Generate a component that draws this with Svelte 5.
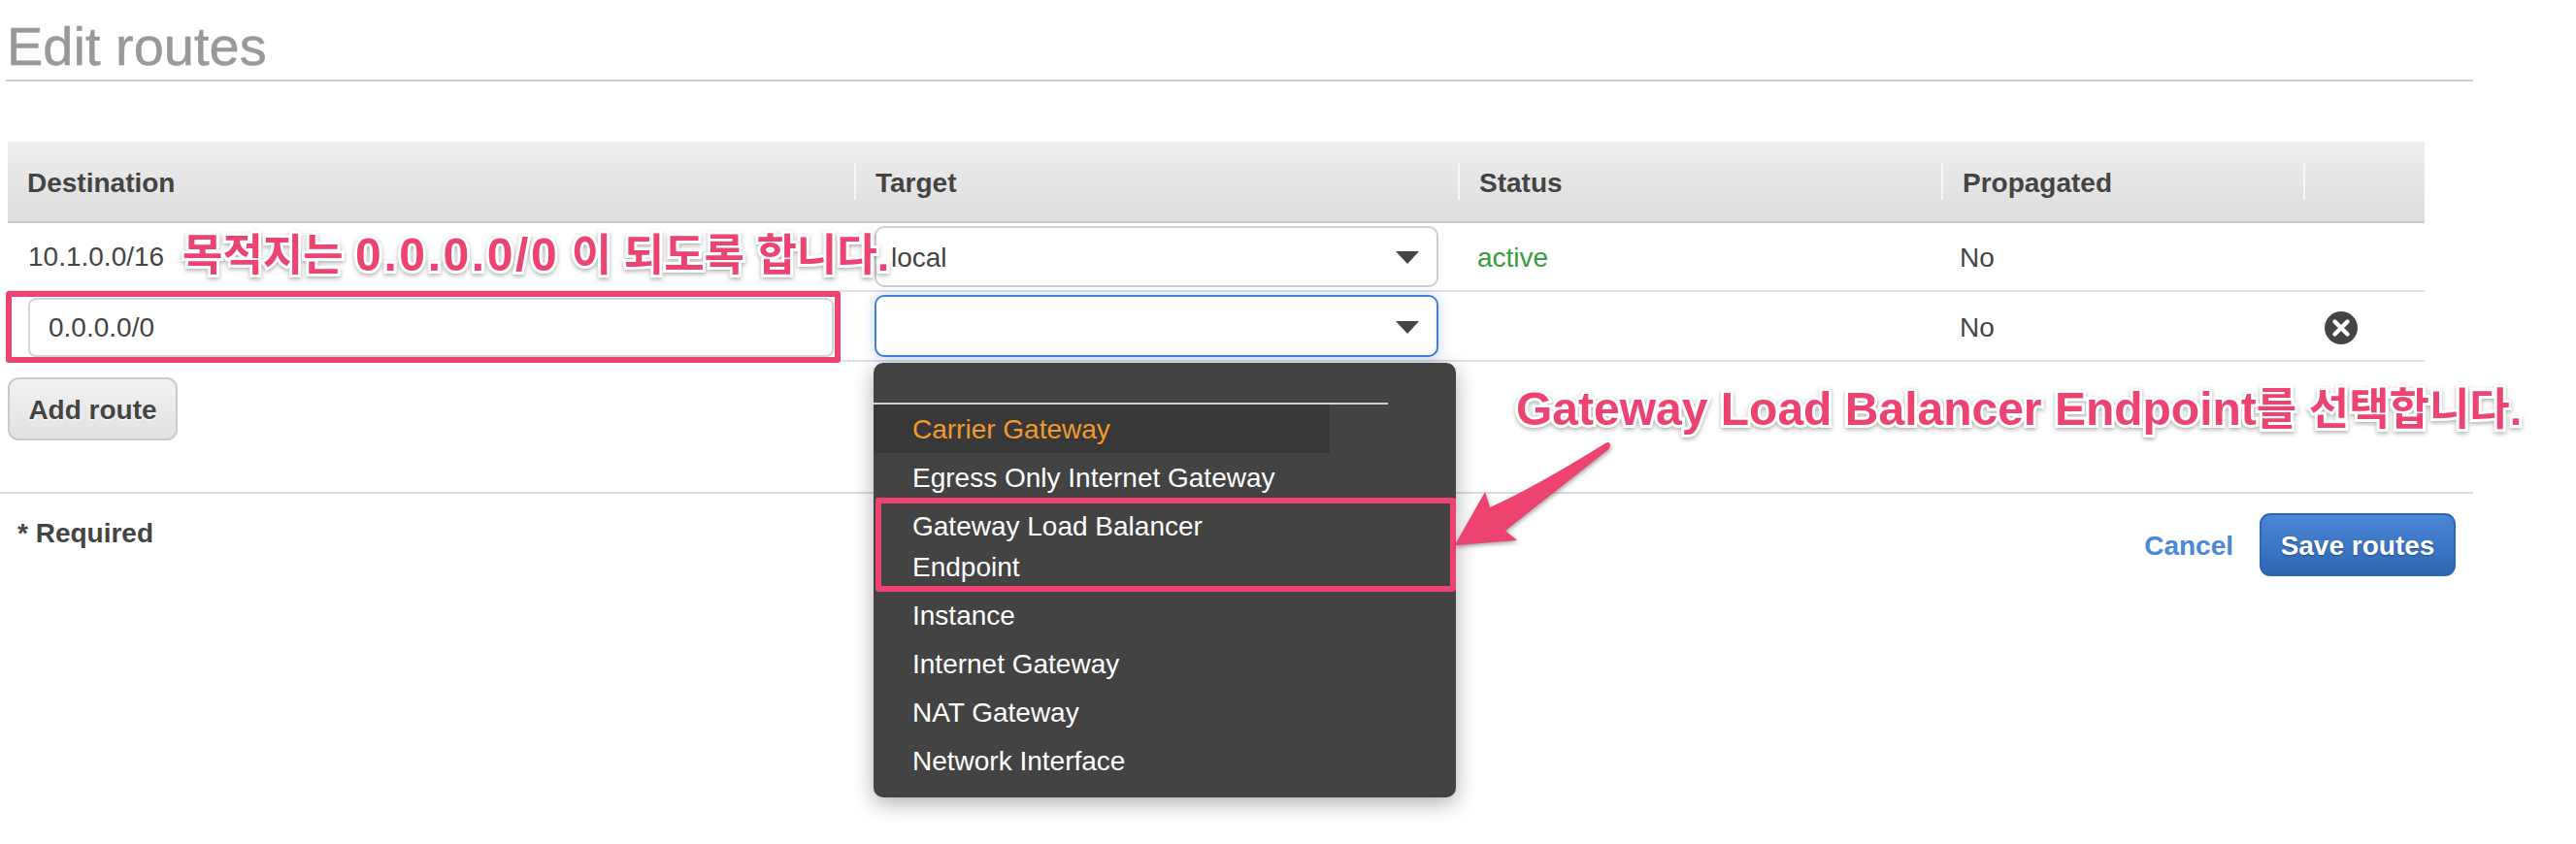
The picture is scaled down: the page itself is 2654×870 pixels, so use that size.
<script>
  const items = ["Egress Only Internet Gateway", "Gateway Load Balancer Endpoint", "Instance", "Internet Gateway", "NAT Gateway", "Network Interface"];
</script>

<div class="page">
  <h1 class="title">Edit routes</h1>

  <div class="table">
    <div class="head">
      <div class="th">Destination</div>
      <div class="th sep">Target</div>
      <div class="th sep">Status</div>
      <div class="th sep">Propagated</div>
      <div class="th sep"></div>
    </div>
    <div class="row first">
      <div class="td dest">10.1.0.0/16</div>
      <div class="td target">
        <div class="select"><span>local</span><i class="caret"></i></div>
      </div>
      <div class="td status">active</div>
      <div class="td prop">No</div>
      <div class="td"></div>
    </div>
    <div class="row second">
      <div class="td dest">
        <div class="input">0.0.0.0/0</div>
      </div>
      <div class="td target">
        <div class="select focus"><span></span><i class="caret"></i></div>
      </div>
      <div class="td status"></div>
      <div class="td prop">No</div>
      <div class="td close-cell">
        <svg class="close" viewBox="0 0 36 36" width="36" height="36" aria-hidden="true">
          <circle cx="18" cy="18" r="17" fill="#444" />
          <path d="M11.5 11.5 24.5 24.5M24.5 11.5 11.5 24.5" stroke="#fff" stroke-width="4.4" stroke-linecap="round" />
        </svg>
      </div>
    </div>
  </div>

  <button class="btn add">Add route</button>

  <footer class="footer">
    <span class="required">* Required</span>
    <div class="actions">
      <span class="cancel">Cancel</span>
      <button class="btn save">Save routes</button>
    </div>
  </footer>

  <div class="menu">
    <div class="menu-rule"></div>
    <div class="opt current">Carrier Gateway</div>
    {#each items as item}
      <div class="opt">{item}</div>
    {/each}
  </div>

  <div class="mark mark-input"></div>
  <div class="mark mark-opt"></div>

  <div class="note note-a">목적지는 <span class="nums">0.0.0.0/0</span> 이 되도록 합니다.</div>
  <div class="note note-b"><span class="latin">Gateway Load Balancer Endpoint</span>를 선택합니다.</div>

  <svg class="arrow" viewBox="0 0 180 120" width="180" height="120" aria-hidden="true">
    <path d="M174 9 Q179 6 179 12 Q178 15 175 17 L71 99 L83 109 L21 114 Q19 114 17 117 L50 59 L55 75 Q100 55 174 9Z" fill="#ec4370" />
  </svg>
</div>

<style>
  :global(body) {
    margin: 0;
    background: #fff;
  }

  .page {
    position: relative;
    width: 2654px;
    height: 870px;
    overflow: hidden;
    font-family: "Liberation Sans", Arial, sans-serif;
    font-size: 28px;
    color: #444;
    background: #fff;
  }

  .title {
    box-sizing: border-box;
    width: 2542px;
    height: 84px;
    margin: 0 0 62px 6px;
    padding: 16px 0 0 1px;
    border-bottom: 2px solid #ccc;
    font-size: 56px;
    line-height: 64px;
    font-weight: 400;
    color: #999;
    -webkit-text-stroke: 0.5px #999;
  }

  .table {
    width: 2490px;
    margin-left: 8px;
  }

  .head,
  .row {
    display: grid;
    grid-template-columns: 872px 622px 498px 373px 125px;
  }

  .head {
    box-sizing: border-box;
    height: 84px;
    padding-top: 22px;
    border-bottom: 2px solid #c9c9c9;
    background: linear-gradient(#eeeeee, #dddddd);
  }

  .th {
    box-sizing: border-box;
    height: 38px;
    padding-left: 20px;
    font-weight: 700;
    line-height: 42px;
    color: #444;
  }

  .sep {
    border-left: 2px solid #f8f8f8;
  }

  .row {
    box-sizing: border-box;
    border-bottom: 2px solid #e1e1e1;
  }

  .first {
    height: 71px;
  }

  .second {
    height: 72px;
  }

  .td {
    display: flex;
    align-items: center;
    min-width: 0;
  }

  .dest {
    padding-left: 21px;
  }

  .second .dest {
    padding-top: 3px;
  }

  .target {
    padding-left: 21px;
  }

  .status {
    padding-left: 20px;
    padding-top: 2px;
    color: #3a9a3f;
  }

  .prop {
    padding-left: 19px;
    padding-top: 3px;
  }

  .input {
    box-sizing: border-box;
    width: 830px;
    height: 61px;
    padding: 0 0 0 19px;
    border: 2px solid #d4d4d4;
    border-radius: 8px;
    line-height: 57px;
    background: #fff;
  }

  .select {
    box-sizing: border-box;
    display: flex;
    align-items: center;
    justify-content: space-between;
    width: 581px;
    height: 63px;
    padding: 2px 18px 0 15px;
    border: 2px solid #cfcfcf;
    border-radius: 10px;
    background: #fff;
  }

  .focus {
    height: 64px;
    border-color: #3f80d8;
    box-shadow: 0 0 14px rgba(80, 140, 225, 0.35);
  }

  .caret {
    width: 0;
    height: 0;
    border-left: 12px solid transparent;
    border-right: 12px solid transparent;
    border-top: 13px solid #444;
  }

  .close-cell {
    padding-left: 21px;
    padding-top: 3px;
  }

  .close {
    display: block;
  }

  .btn {
    box-sizing: border-box;
    height: 65px;
    margin: 0;
    padding: 2px 0 0;
    font: 700 28px/1 "Liberation Sans", Arial, sans-serif;
    cursor: pointer;
  }

  .add {
    display: block;
    width: 175px;
    margin: 16px 0 53px 8px;
    border: 2px solid #cbcbcb;
    border-radius: 11px;
    color: #444;
    text-shadow: 0 1px 1px #fff;
    background: linear-gradient(#f2f2f2, #e2e2e2);
  }

  .footer {
    box-sizing: border-box;
    display: flex;
    justify-content: space-between;
    width: 2548px;
    padding: 20px 18px 0 18px;
    border-top: 2px solid #ddd;
  }

  .required {
    font-weight: 700;
    line-height: 42px;
  }

  .actions {
    display: flex;
    align-items: center;
    gap: 27px;
  }

  .cancel {
    padding-top: 2px;
    font-weight: 700;
    color: #4a88da;
  }

  .save {
    width: 202px;
    border: 2px solid #2f66b1;
    border-radius: 11px;
    color: #fff;
    text-shadow: 0 1px 2px rgba(0, 0, 0, 0.35);
    background: linear-gradient(#4a87d6, #2f66b4);
  }

  .menu {
    position: absolute;
    left: 900px;
    top: 374px;
    box-sizing: border-box;
    width: 600px;
    height: 448px;
    padding-top: 41px;
    border-radius: 10px;
    background: #434343;
    box-shadow: 0 6px 22px rgba(0, 0, 0, 0.32);
  }

  .menu-rule {
    width: 530px;
    height: 2px;
    background: #d2d2d2;
  }

  .opt {
    box-sizing: border-box;
    width: 470px;
    padding: 5px 40px 3px 40px;
    line-height: 42px;
    color: #fff;
  }

  .current {
    height: 50px;
    color: #f2992e;
    background: #383838;
  }

  .mark {
    position: absolute;
    box-sizing: border-box;
    border: 6px solid #ec4370;
    border-radius: 3px;
  }

  .mark-input {
    left: 6px;
    top: 300px;
    width: 860px;
    height: 74px;
  }

  .mark-opt {
    left: 902px;
    top: 513px;
    width: 598px;
    height: 97px;
  }

  .note {
    position: absolute;
    font-family: "Liberation Sans", "Noto Sans CJK KR", sans-serif;
    font-size: 45px;
    line-height: 60px;
    font-weight: 700;
    white-space: nowrap;
    color: #ec4370;
    -webkit-text-stroke: 6px #fff;
    paint-order: stroke fill;
    filter: drop-shadow(0 2px 2px rgba(0, 0, 0, 0.3));
  }

  .nums {
    font-size: 48px;
    letter-spacing: 2.6px;
  }

  .latin {
    font-size: 48px;
  }

  .note-a {
    left: 188px;
    top: 233px;
  }

  .note-b {
    left: 1562px;
    top: 392px;
  }

  .arrow {
    position: absolute;
    left: 1480px;
    top: 448px;
    overflow: visible;
    filter: drop-shadow(1px 2px 2px rgba(0, 0, 0, 0.35));
  }
</style>
